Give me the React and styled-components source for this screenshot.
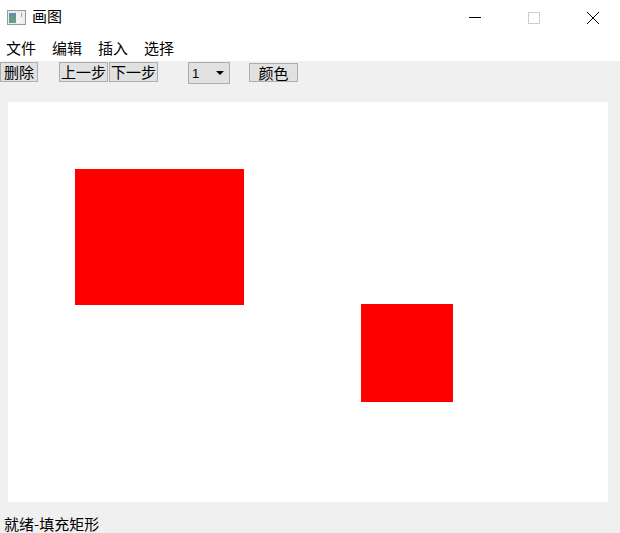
import React from "react";
import styled, { createGlobalStyle } from "styled-components";

const Global = createGlobalStyle`
  html, body { margin: 0; padding: 0; background: #fff; }
  body { font-family: "Noto Sans CJK SC", "Liberation Sans", sans-serif; }
`;

const Win = styled.div`
  width: 620px;
  height: 533px;
  display: flex;
  flex-direction: column;
  overflow: hidden;
  background: #f0f0f0;
  color: #000;
`;

const TitleBar = styled.div`
  height: 35px;
  flex: none;
  display: flex;
  align-items: center;
  background: #fff;
  padding-left: 7px;
`;

const Title = styled.span`
  font-size: 15px;
  line-height: 20px;
  margin-left: 6px;
  padding-bottom: 3px;
`;

const WinBtns = styled.div`
  margin-left: auto;
  margin-right: -2px;
  display: flex;
  flex: none;
`;

const WinBtn = styled.div`
  width: 59px;
  height: 35px;
  display: flex;
  align-items: center;
  justify-content: center;
`;

const MenuBar = styled.div`
  height: 26px;
  flex: none;
  display: flex;
  align-items: center;
  background: #fff;
  padding-left: 6px;
  gap: 16px;
`;

const MenuItem = styled.span`
  font-size: 15px;
  line-height: 30px;
`;

const ToolBar = styled.div`
  height: 41px;
  flex: none;
  display: flex;
  align-items: flex-start;
  padding-top: 1px;
  box-sizing: border-box;
`;

const Btn = styled.div`
  width: ${(p) => p.$w}px;
  height: ${(p) => p.$h || 20}px;
  margin-left: ${(p) => p.$ml || 0}px;
  margin-top: ${(p) => p.$mt || 0}px;
  box-sizing: border-box;
  flex: none;
  background: #e1e1e1;
  border: 1px solid #adadad;
  font-size: 15px;
  line-height: 17px;
  text-align: center;
  white-space: nowrap;
`;

const Combo = styled.div`
  width: 42px;
  height: 22px;
  margin-left: 30px;
  box-sizing: border-box;
  flex: none;
  background: #e1e1e1;
  border: 1px solid #adadad;
  display: flex;
  align-items: center;
  justify-content: space-between;
  padding: 0 5px 0 3px;
  font-family: "Liberation Sans", sans-serif;
  font-size: 13px;
`;

const Caret = styled.span`
  width: 0;
  height: 0;
  border-left: 4px solid transparent;
  border-right: 4px solid transparent;
  border-top: 4px solid #000;
`;

const CanvasArea = styled.div`
  flex: 1;
  padding: 0 12px 0 8px;
`;

const Canvas = styled.div`
  position: relative;
  width: 600px;
  height: 400px;
  background: #fff;
`;

const Shape = styled.div`
  position: absolute;
  background: #ff0000;
  left: ${(p) => p.$x}px;
  top: ${(p) => p.$y}px;
  width: ${(p) => p.$w}px;
  height: ${(p) => p.$h}px;
`;

const Status = styled.div`
  height: 31px;
  flex: none;
  box-sizing: border-box;
  padding: 12px 0 0 4px;
  font-size: 15px;
  line-height: 19px;
  white-space: nowrap;
`;

const AppIcon = () => (
  <svg width="19" height="16" viewBox="0 0 19 16">
    <defs>
      <linearGradient id="g" x1="0" y1="0" x2="0" y2="1">
        <stop offset="0" stopColor="#5a90a8" />
        <stop offset="1" stopColor="#6fa080" />
      </linearGradient>
    </defs>
    <rect x="0.5" y="0.5" width="18" height="14" fill="#ececec" stroke="#9a9a9a" />
    <rect x="2" y="3" width="7" height="10" fill="url(#g)" />
    <rect x="9" y="3" width="7" height="10" fill="#f4f4f4" />
    <rect x="14" y="3" width="1" height="4" fill="#7fa8a8" />
  </svg>
);

export default function App() {
  return (
    <Win>
      <Global />
      <TitleBar>
        <AppIcon />
        <Title>画图</Title>
        <WinBtns>
          <WinBtn>
            <svg width="12" height="12" viewBox="0 0 12 12">
              <path d="M0 5.5H12" stroke="#000" />
            </svg>
          </WinBtn>
          <WinBtn>
            <svg width="12" height="12" viewBox="0 0 12 12">
              <rect x="0.5" y="0.5" width="11" height="11" fill="none" stroke="#ccc" />
            </svg>
          </WinBtn>
          <WinBtn>
            <svg width="12" height="12" viewBox="0 0 12 12">
              <path d="M0 0L12 12M12 0L0 12" stroke="#000" />
            </svg>
          </WinBtn>
        </WinBtns>
      </TitleBar>
      <MenuBar>
        <MenuItem>文件</MenuItem>
        <MenuItem>编辑</MenuItem>
        <MenuItem>插入</MenuItem>
        <MenuItem>选择</MenuItem>
      </MenuBar>
      <ToolBar>
        <Btn $w={38}>删除</Btn>
        <Btn $w={49} $ml={21}>上一步</Btn>
        <Btn $w={49} $ml={1}>下一步</Btn>
        <Combo>
          1<Caret />
        </Combo>
        <Btn $w={49} $ml={19} $mt={1} $h={19}>颜色</Btn>
      </ToolBar>
      <CanvasArea>
        <Canvas>
          <Shape $x={67} $y={67} $w={169} $h={136} />
          <Shape $x={353} $y={202} $w={92} $h={98} />
        </Canvas>
      </CanvasArea>
      <Status>就绪-填充矩形</Status>
    </Win>
  );
}
